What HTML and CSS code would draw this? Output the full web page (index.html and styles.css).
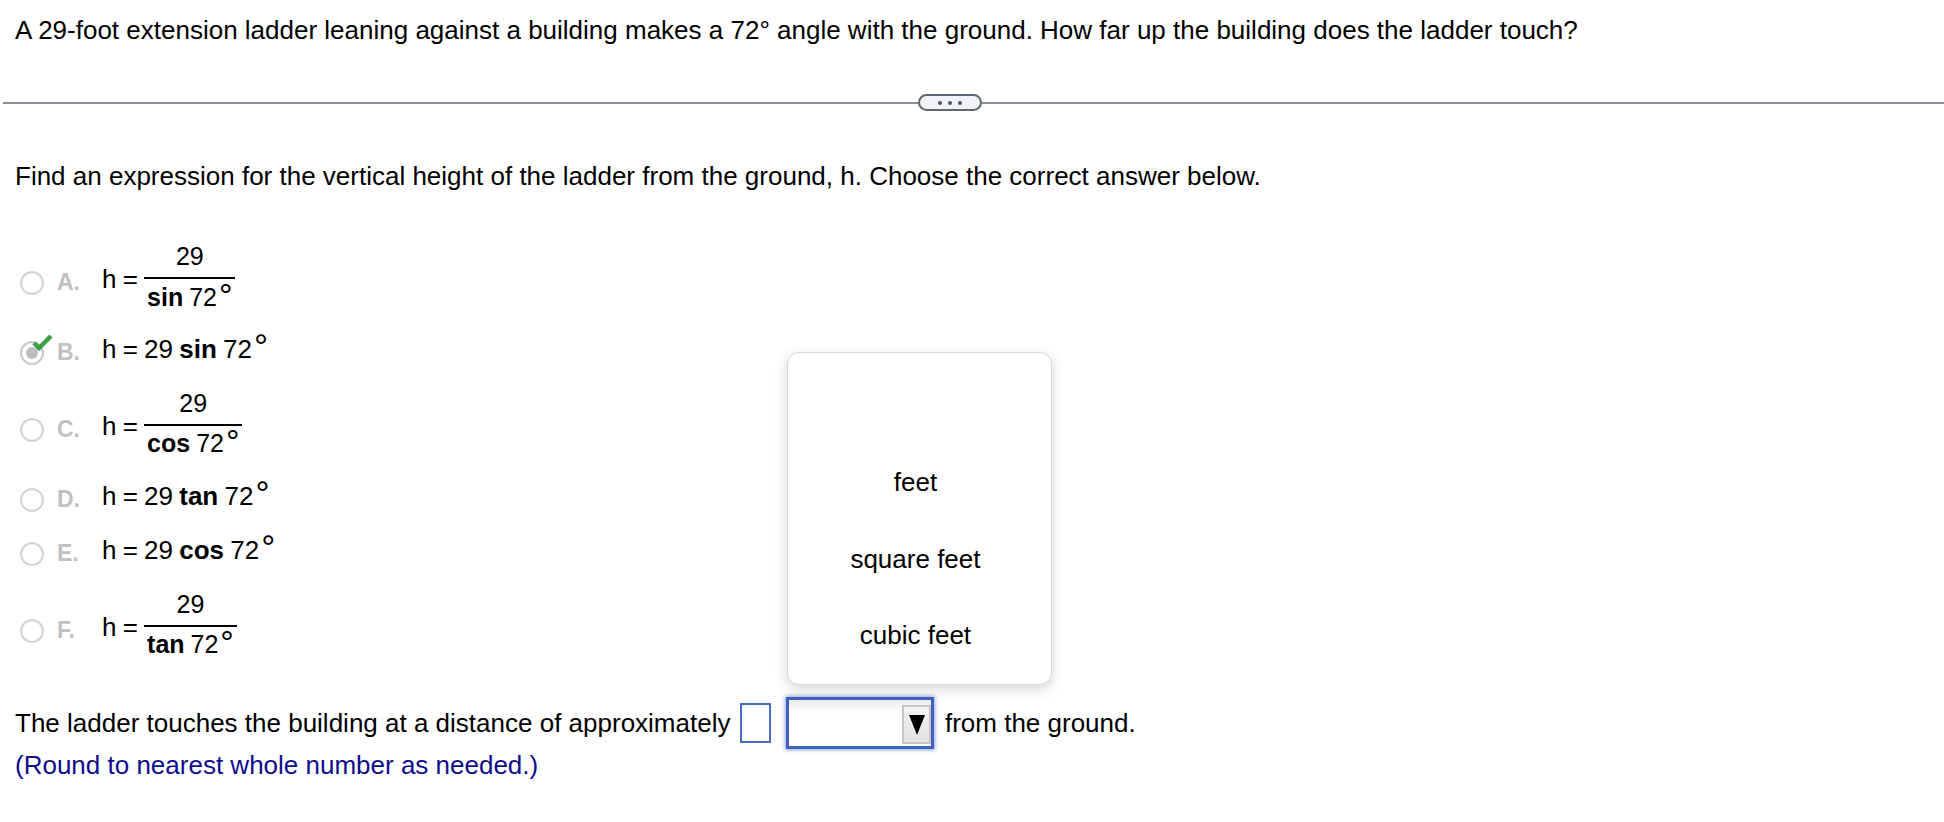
FILE: index.html
```html
<!DOCTYPE html>
<html>
<head>
<meta charset="utf-8">
<title>Ladder</title>
<link rel="stylesheet" href="styles.css">
</head>
<body>
<div class="page">
  <p class="title">A 29-foot extension ladder leaning against a building makes a 72° angle with the ground. How far up the building does the ladder touch?</p>
  <div class="divider"><span class="rule rule-left"></span><div class="more"><span class="dot"></span><span class="dot"></span><span class="dot"></span></div><span class="rule rule-right"></span></div>
  <p class="prompt">Find an expression for the vertical height of the ladder from the ground, h. Choose the correct answer below.</p>
  <div class="options">
    <div class="opt"><span class="radio"></span><span class="label">A.</span><span class="expr">h = <span class="frac"><span class="num">29</span><span class="bar"></span><span class="den"><b>sin</b> 72<span class="deg">°</span></span></span></span></div>
    <div class="opt"><span class="radio sel"><svg class="check" width="26" height="20" viewBox="0 0 26 20"><polyline points="4,10 9,15 21,3" fill="none" stroke="#3c9e47" stroke-width="4.5"/></svg></span><span class="label">B.</span><span class="expr">h = 29 <b>sin</b> 72<span class="deg">°</span></span></div>
    <div class="opt"><span class="radio"></span><span class="label">C.</span><span class="expr">h = <span class="frac"><span class="num">29</span><span class="bar"></span><span class="den"><b>cos</b> 72<span class="deg">°</span></span></span></span></div>
    <div class="opt"><span class="radio"></span><span class="label">D.</span><span class="expr">h = 29 <b>tan</b> 72<span class="deg">°</span></span></div>
    <div class="opt"><span class="radio"></span><span class="label">E.</span><span class="expr">h = 29 <b>cos</b> 72<span class="deg">°</span></span></div>
    <div class="opt"><span class="radio"></span><span class="label">F.</span><span class="expr">h = <span class="frac"><span class="num">29</span><span class="bar"></span><span class="den"><b>tan</b> 72<span class="deg">°</span></span></span></span></div>
  </div>
  <div class="answer">
    <span class="txt">The ladder touches the building at a distance of approximately</span>
    <span class="box"></span>
    <div class="select-wrap">
      <div class="select"><span class="arrow-btn"><span class="tri"></span></span></div>
      <div class="popup">
        <div class="popup-item">&nbsp;</div>
        <div class="popup-item">feet</div>
        <div class="popup-item">square feet</div>
        <div class="popup-item">cubic feet</div>
      </div>
    </div>
    <span class="txt from">from the ground.</span>
  </div>
  <p class="note">(Round to nearest whole number as needed.)</p>
</div>
</body>
</html>
```

FILE: styles.css
```css
html, body {
  margin: 0;
  background: #fff;
}
body {
  font-family: "Liberation Sans", Arial, Helvetica, sans-serif;
  color: #000;
}
.page {
  padding-top: 15px;
}
.title, .prompt {
  margin: 0 0 0 15px;
  font-size: 26px;
  line-height: 30px;
  white-space: nowrap;
}
.divider {
  display: flex;
  align-items: center;
  margin-top: 49px;
  padding-left: 3px;
  height: 17px;
}
.rule {
  height: 2px;
  background: #8a909a;
}
.rule-left {
  width: 915px;
  flex: none;
}
.rule-right {
  flex: 1;
}
.more {
  box-sizing: border-box;
  flex: none;
  width: 64px;
  height: 17px;
  border: 2px solid #5d6672;
  border-radius: 9px;
  background: #f1f3f6;
  display: flex;
  align-items: center;
  justify-content: center;
  gap: 6px;
}
.dot {
  width: 4px;
  height: 4px;
  border-radius: 50%;
  background: #4f5864;
}
.prompt {
  margin-top: 50px;
}
.options {
  margin-top: 51.3px;
  display: flex;
  flex-direction: column;
  gap: 23.5px;
}
.opt {
  padding-left: 20px;
  font-size: 26px;
  line-height: 30px;
  white-space: nowrap;
}
.radio {
  display: inline-block;
  box-sizing: border-box;
  width: 24px;
  height: 24px;
  border: 2px solid #d4d4d4;
  border-radius: 50%;
  vertical-align: -7px;
  position: relative;
  background: #fff;
  box-shadow: inset 0 1px 2px rgba(0,0,0,0.06);
}
.radio.sel {
  border-color: #c8c8c8;
}
.radio.sel::after {
  content: "";
  position: absolute;
  left: 4px;
  top: 4px;
  width: 12px;
  height: 12px;
  border-radius: 50%;
  background: #bdbdbd;
}
.check {
  position: absolute;
  left: 8px;
  top: -10px;
  z-index: 1;
}
.label {
  display: inline-block;
  width: 45px;
  margin-left: 13px;
  font-size: 23px;
  font-weight: bold;
  color: #c0c0c0;
  line-height: 24px;
  vertical-align: -2px;
}
.expr {
  word-spacing: -1px;
}
.frac {
  display: inline-flex;
  flex-direction: column;
  align-items: center;
  vertical-align: 23px;
  font-size: 25px;
  line-height: 28px;
  word-spacing: -1px;
}
.bar {
  align-self: stretch;
  height: 2px;
  background: #000;
  margin: 7px 0 3.5px;
}
.den {
  padding: 0 3px;
}
.deg {
  font-size: 1.35em;
  line-height: 0;
  vertical-align: -1px;
  margin-left: 2px;
}
.answer {
  display: flex;
  align-items: center;
  margin: 39.2px 0 0 15px;
  font-size: 26px;
  line-height: 30px;
  white-space: nowrap;
}
.box {
  box-sizing: border-box;
  width: 31px;
  height: 40px;
  border: 2px solid #4a6bc6;
  margin-left: 10px;
}
.select-wrap {
  position: relative;
  margin-left: 15px;
}
.select {
  box-sizing: border-box;
  width: 148px;
  height: 52px;
  border: 3px solid #3f61c2;
  display: flex;
  justify-content: flex-end;
  align-items: center;
  background: linear-gradient(#ececec, #ffffff 14px);
  box-shadow: 0 0 4px 1px rgba(63,97,194,0.55);
}
.arrow-btn {
  box-sizing: border-box;
  width: 29px;
  height: 39px;
  margin-top: 3px;
  border: 2px solid #c6c6c6;
  background: linear-gradient(#f4f4f4, #e2e2e2);
  display: flex;
  align-items: center;
  justify-content: center;
}
.tri {
  width: 0;
  height: 0;
  border-left: 8px solid transparent;
  border-right: 8px solid transparent;
  border-top: 20px solid #000;
}
.from {
  margin-left: 10.5px;
}
.popup {
  position: absolute;
  left: 1px;
  bottom: calc(100% + 12px);
  box-sizing: border-box;
  width: 265px;
  height: 333px;
  background: #fff;
  border: 1px solid #d6d6d6;
  border-radius: 12px;
  box-shadow: 0 4px 14px rgba(0,0,0,0.16);
  padding: 14.5px 9px 12px 0;
  z-index: 2;
}
.popup-item {
  height: 76.5px;
  line-height: 76.5px;
  text-align: center;
  font-size: 26px;
}
.note {
  margin: 1px 0 0 15px;
  font-size: 26px;
  line-height: 30px;
  color: #0c0c8c;
}
```
